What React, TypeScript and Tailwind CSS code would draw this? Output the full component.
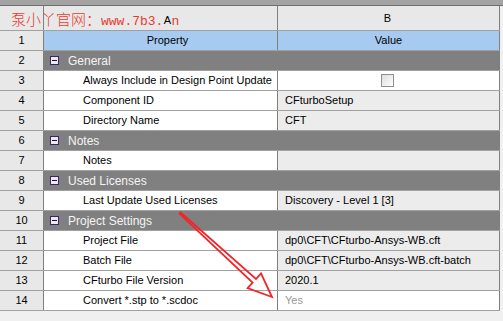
import React from 'react';

type Row =
  | { kind: 'group'; n: number; label: string }
  | { kind: 'prop'; n: number; label: string; value?: string; editable?: boolean; check?: boolean; muted?: boolean };

const rows: Row[] = [
  { kind: 'group', n: 2, label: 'General' },
  { kind: 'prop', n: 3, label: 'Always Include in Design Point Update', check: true, editable: true },
  { kind: 'prop', n: 4, label: 'Component ID', value: 'CFturboSetup' },
  { kind: 'prop', n: 5, label: 'Directory Name', value: 'CFT' },
  { kind: 'group', n: 6, label: 'Notes' },
  { kind: 'prop', n: 7, label: 'Notes', value: '' },
  { kind: 'group', n: 8, label: 'Used Licenses' },
  { kind: 'prop', n: 9, label: 'Last Update Used Licenses', value: 'Discovery - Level 1 [3]' },
  { kind: 'group', n: 10, label: 'Project Settings' },
  { kind: 'prop', n: 11, label: 'Project File', value: 'dp0\\CFT\\CFturbo-Ansys-WB.cft' },
  { kind: 'prop', n: 12, label: 'Batch File', value: 'dp0\\CFT\\CFturbo-Ansys-WB.cft-batch' },
  { kind: 'prop', n: 13, label: 'CFturbo File Version', value: '2020.1' },
  { kind: 'prop', n: 14, label: 'Convert *.stp to *.scdoc', value: 'Yes', editable: true, muted: true },
];

const NumCell = ({ n }: { n: number }) => (
  <div className="w-[44px] shrink-0 bg-[#e8e8e8] border-r border-[#7f7f7f] flex items-center justify-center text-black">
    {n}
  </div>
);

const Collapse = () => (
  <div className="w-[9px] h-[9px] border border-[#3d2466] bg-[#eee8f5] flex items-center justify-center">
    <div className="w-[5px] h-[1px] bg-[#1a1030]" />
  </div>
);

export default function App() {
  return (
    <div
      className="relative w-[503px] h-[321px] overflow-hidden bg-[#f0f0f0] text-[11px]"
      style={{ fontFamily: '"Liberation Sans", Arial, sans-serif' }}
    >
      <div className="h-[5px] bg-[#a3a3a3] border-b border-[#6f6f6f] box-content" />
      <div className="w-[500px]">
        {/* column letters */}
        <div className="flex h-[25px] border-b border-[#a0a0a0]">
          <div className="w-[44px] shrink-0 bg-[#e8e8e8] border-r border-[#7f7f7f]" />
          <div className="w-[234px] shrink-0 bg-[#e8e8e8] border-r border-[#7f7f7f] flex items-center justify-center pl-[14px] pt-[4px] text-black">A</div>
          <div className="flex-1 bg-[#e8e8e8] border-r border-[#7f7f7f] flex items-center justify-center text-black pr-[2px]">B</div>
        </div>
        {/* header row */}
        <div className="flex h-[20px] border-b border-[#a0a0a0]">
          <NumCell n={1} />
          <div className="w-[234px] shrink-0 bg-[#a6caf0] border-r border-[#7f7f7f] flex items-center justify-center pl-[14px] text-black">Property</div>
          <div className="flex-1 bg-[#a6caf0] border-r border-[#7f7f7f] flex items-center justify-center text-black">Value</div>
        </div>
        {rows.map((r) =>
          r.kind === 'group' ? (
            <div key={r.n} className="flex h-[20px] border-b border-[#a0a0a0]">
              <NumCell n={r.n} />
              <div className="flex-1 bg-[#808080] border-r border-[#7f7f7f] flex items-center pl-[6px] gap-[9px] text-[#f4f4f4] text-[12px]">
                <Collapse />
                <span>{r.label}</span>
              </div>
            </div>
          ) : (
            <div key={r.n} className="flex h-[20px] border-b border-[#a0a0a0]">
              <NumCell n={r.n} />
              <div className="w-[234px] shrink-0 bg-white border-r border-[#7f7f7f] flex items-center pl-[39px] text-black whitespace-nowrap overflow-hidden">
                {r.label}
              </div>
              <div
                className={`flex-1 border-r border-[#7f7f7f] flex items-center pl-[7px] whitespace-nowrap ${
                  r.editable ? 'bg-white' : 'bg-[#ececec]'
                } ${r.muted ? 'text-[#9a9a9a]' : 'text-black'}`}
              >
                {r.check ? (
                  <div className="w-full flex justify-center pr-[10px]">
                    <div className="w-[13px] h-[13px] border border-[#8e8f8f] bg-gradient-to-br from-[#dcdcdc] to-white" />
                  </div>
                ) : (
                  r.value
                )}
              </div>
            </div>
          )
        )}
      </div>

      {/* watermark, the "c" is hidden under the column letter */}
      <div className="absolute left-[11px] top-[8px] flex items-baseline text-[#ea3b2e]">
        <span className="text-[15px]" style={{ fontFamily: '"Noto Sans CJK SC", sans-serif', fontWeight: 300 }}>
          泵小丫官网：
        </span>
        <span className="text-[13px]" style={{ fontFamily: '"Liberation Mono", monospace' }}>
          www.7b3.
        </span>
        <span className="text-[13px] ml-[8px]" style={{ fontFamily: '"Liberation Mono", monospace' }}>
          n
        </span>
      </div>

      {/* red arrow */}
      <svg className="absolute inset-0 pointer-events-none" width="503" height="321" viewBox="0 0 503 321">
        <polygon
          points="179.5,213.6 252.6,282.6 247.6,288.2 272,297 261,273.4 256,279 180.5,212.4"
          fill="none"
          stroke="#f0262a"
          strokeWidth="1.8"
          strokeLinejoin="miter"
        />
      </svg>
    </div>
  );
}
